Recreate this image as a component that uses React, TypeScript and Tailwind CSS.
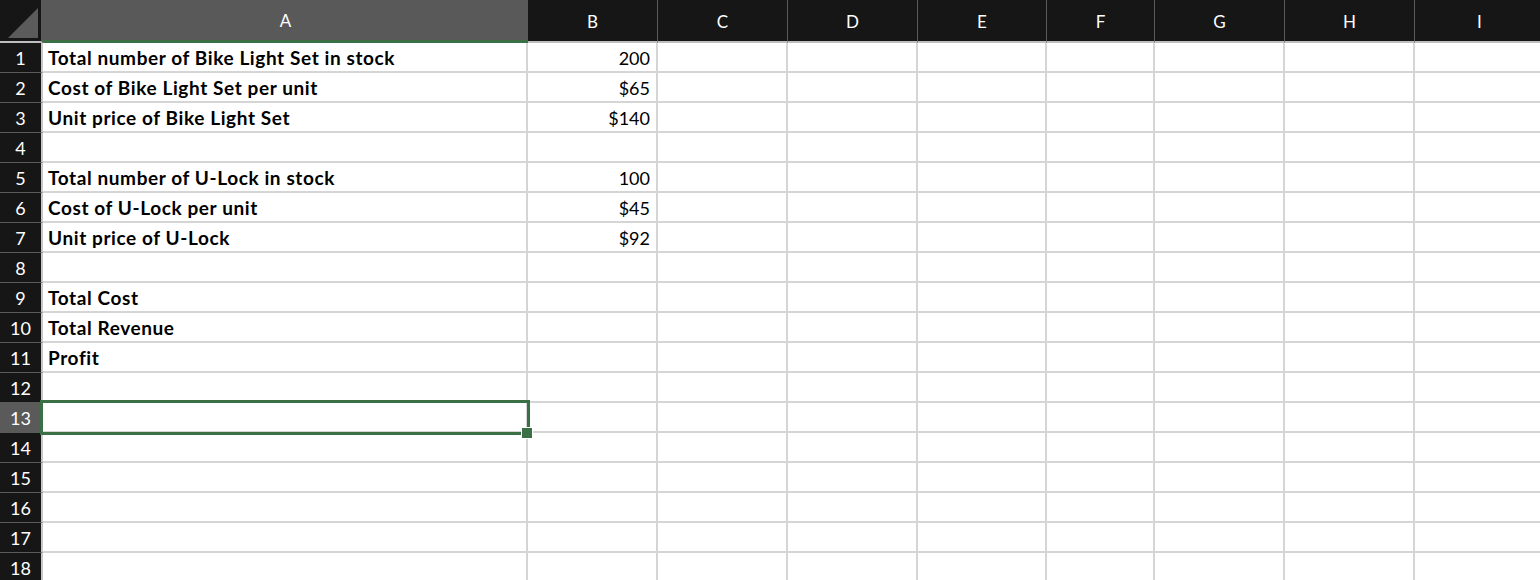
import React from 'react'

const COLS = ['A', 'B', 'C', 'D', 'E', 'F', 'G', 'H', 'I']

const ROWS: { label?: string; value?: string }[] = [
  { label: 'Total number of Bike Light Set in stock', value: '200' },
  { label: 'Cost of Bike Light Set per unit', value: '$65' },
  { label: 'Unit price of Bike Light Set', value: '$140' },
  {},
  { label: 'Total number of U-Lock in stock', value: '100' },
  { label: 'Cost of U-Lock per unit', value: '$45' },
  { label: 'Unit price of U-Lock', value: '$92' },
  {},
  { label: 'Total Cost' },
  { label: 'Total Revenue' },
  { label: 'Profit' },
  {},
  {},
  {},
  {},
  {},
  {},
  {},
]

const SELECTED_ROW = 13

export default function App() {
  return (
    <div
      className="relative w-[1540px] h-[580px] overflow-hidden bg-white"
      style={{ fontFamily: 'Lato, "Liberation Sans", sans-serif' }}
    >
      <div className="grid grid-cols-[43px_485px_130px_130px_130px_129px_108px_130px_130px_130px]">
        {/* corner */}
        <div className="relative h-[43px] bg-[#161616] border-b-2 border-b-[#bfbfbf] border-r-2 border-r-[#5a5a5a]">
          <svg className="absolute left-[8px] top-[8px]" width="30" height="30" viewBox="0 0 30 30">
            <polygon points="30,0 30,30 0,30" fill="#5b5b5b" />
          </svg>
        </div>

        {/* column headers */}
        {COLS.map((c) => (
          <div
            key={c}
            className={
              c === 'A'
                ? 'h-[43px] flex items-center justify-center pt-[1px] bg-[#595959] border-b-[3px] border-b-[#3b7046] text-white text-[17px]'
                : 'h-[43px] flex items-center justify-center pt-[2px] bg-[#161616] border-r border-r-[#5a5a5a] border-b-2 border-b-[#bfbfbf] text-white text-[17px]'
            }
          >
            {c}
          </div>
        ))}

        {/* body */}
        {ROWS.map((row, i) => {
          const n = i + 1
          return (
            <React.Fragment key={n}>
              <div
                className={`h-[30px] flex items-center justify-center pt-[2px] text-white text-[18px] border-b border-b-[#5a5a5a] border-r-2 border-r-[#c8c8c8] ${
                  n === SELECTED_ROW ? 'bg-[#5a5a5a]' : 'bg-[#161616]'
                }`}
              >
                {n}
              </div>
              <div className="h-[30px] flex items-center pl-[5px] pt-[2px] border-b-2 border-r-2 border-[#d5d5d5] font-bold text-[19px] tracking-[0.6px] text-black whitespace-nowrap">
                {row.label}
              </div>
              <div className="h-[30px] flex items-center justify-end pr-[6px] pt-[2px] border-b-2 border-r-2 border-[#d5d5d5] text-[18px] text-black">
                {row.value}
              </div>
              {COLS.slice(2).map((c) => (
                <div key={c} className="h-[30px] border-b-2 border-r-2 border-[#d5d5d5]" />
              ))}
            </React.Fragment>
          )
        })}
      </div>

      {/* selected cell A13 */}
      <div className="absolute left-[40px] top-[400px] w-[490px] h-[35px] border-[3px] border-[#3b7046] pointer-events-none" />
      <div className="absolute left-[521px] top-[427px] w-[12px] h-[12px] bg-white p-[1px]">
        <div className="w-full h-full bg-[#3b7046]" />
      </div>
    </div>
  )
}
